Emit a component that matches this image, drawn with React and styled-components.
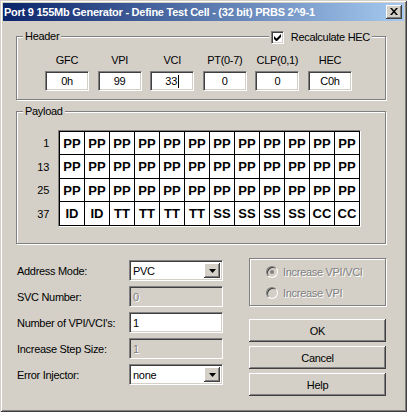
import React from "react";
import styled, { createGlobalStyle } from "styled-components";

const GlobalStyle = createGlobalStyle`
  html, body { margin: 0; padding: 0; background: #d4d0c8; }
  body {
    font-family: "Liberation Sans", Arial, sans-serif;
    font-size: 11px;
    letter-spacing: -0.3px;
    color: #000;
  }
  * { box-sizing: border-box; }
`;

const Window = styled.div`
  width: 407px;
  height: 412px;
  padding: 3px;
  background: #d4d0c8;
  box-shadow: inset 1px 1px 0 #d4d0c8, inset -1px -1px 0 #404040,
    inset 2px 2px 0 #fff, inset -2px -2px 0 #808080;
  display: flex;
  flex-direction: column;
`;

const TitleBar = styled.div`
  height: 18px;
  background: linear-gradient(to right, #0a246a, #a6caf0);
  display: flex;
  align-items: center;
  justify-content: space-between;
  padding: 0 2px 0 1px;
`;

const TitleText = styled.div`
  color: #fff;
  font-weight: bold;
  font-size: 11px;
  letter-spacing: -0.25px;
  white-space: nowrap;
`;

const Raised = styled.div`
  background: #d4d0c8;
  box-shadow: inset -1px -1px 0 #404040, inset 1px 1px 0 #fff,
    inset -2px -2px 0 #808080, inset 2px 2px 0 #d4d0c8;
`;

const CloseButton = styled(Raised)`
  width: 16px;
  height: 14px;
  display: flex;
  align-items: center;
  justify-content: center;
  padding-bottom: 1px;
`;

const Body = styled.div`
  padding: 15px 18px 0 13px;
  display: flex;
  flex-direction: column;
`;

const GroupBox = styled.div`
  position: relative;
  height: ${(p) => p.$h}px;
  border: 1px solid #808080;
  box-shadow: inset 1px 1px 0 #fff, 1px 1px 0 #fff;
  margin-top: ${(p) => p.$mt || 0}px;
`;

const Caption = styled.div`
  position: absolute;
  top: -7px;
  left: 6px;
  padding: 0 2px;
  line-height: 13px;
  background: #d4d0c8;
`;

const CheckCaption = styled.label`
  position: absolute;
  top: -7px;
  right: 13px;
  padding: 0 2px;
  height: 14px;
  display: flex;
  align-items: center;
  gap: 7px;
  background: #d4d0c8;
`;

const Sunken = styled.div`
  border: 1px solid;
  border-color: #808080 #fff #fff #808080;
  box-shadow: inset 1px 1px 0 #404040, inset -1px -1px 0 #d4d0c8;
`;

const CheckBox = styled(Sunken)`
  width: 13px;
  height: 13px;
  background: #fff;
  display: flex;
  align-items: center;
  justify-content: center;
`;

const HeaderGrid = styled.div`
  display: grid;
  grid-template-columns: repeat(6, 44px);
  grid-template-rows: 14px 20px;
  column-gap: 8.6px;
  row-gap: 4px;
  padding: 16px 0 0 28px;
`;

const ColLabel = styled.div`
  text-align: center;
  line-height: 14px;
  white-space: nowrap;
`;

const Field = styled(Sunken)`
  height: ${(p) => p.$h || 20}px;
  background: ${(p) => (p.$disabled ? "#d4d0c8" : "#fff")};
  color: ${(p) => (p.$disabled ? "#808080" : "#000")};
  text-shadow: ${(p) => (p.$disabled ? "1px 1px 0 #fff" : "none")};
  display: flex;
  align-items: center;
  justify-content: ${(p) => (p.$center ? "center" : "flex-start")};
  padding-left: ${(p) => (p.$center ? 0 : 3)}px;
  white-space: nowrap;
`;

const Caret = styled.span`
  display: inline-block;
  width: 1px;
  height: 13px;
  background: #000;
  margin-left: 1px;
`;

const PayloadBody = styled.div`
  display: flex;
  gap: 9px;
  padding: 18px 0 0 8px;
`;

const RowLabels = styled.div`
  width: 24px;
  display: grid;
  grid-template-rows: 22px 23px 22px 23px;
  row-gap: 1px;
  padding-top: 2px;
`;

const RowLabel = styled.div`
  text-align: right;
  display: flex;
  align-items: center;
  justify-content: flex-end;
`;

const GridFrame = styled.div`
  border: 1px solid;
  border-color: #808080 #fff #fff #808080;
`;

const CellGrid = styled.div`
  display: grid;
  grid-template-columns: repeat(12, 24px);
  grid-template-rows: 22px 23px 22px 23px;
  gap: 1px;
  padding: 1px;
  background: #000;
`;

const Cell = styled.div`
  background: #fff;
  font-weight: bold;
  font-size: 13px;
  letter-spacing: 0;
  display: flex;
  align-items: center;
  justify-content: center;
`;

const Bottom = styled.div`
  display: flex;
  margin-top: 14px;
  gap: 26px;
`;

const FormGrid = styled.div`
  display: grid;
  grid-template-columns: 113px 94px;
  grid-auto-rows: 21px;
  row-gap: 5px;
  padding-top: 2px;
`;

const FormLabel = styled.div`
  padding-left: 1px;
  display: flex;
  align-items: center;
  white-space: nowrap;
`;

const Combo = styled(Sunken)`
  height: 21px;
  background: #fff;
  display: flex;
  align-items: stretch;
  padding: 2px;
`;

const ComboText = styled.div`
  flex: 1;
  display: flex;
  align-items: center;
  padding-left: 1px;
`;

const DropButton = styled(Raised)`
  width: 16px;
  display: flex;
  align-items: center;
  justify-content: center;
`;

const RightCol = styled.div`
  width: 138px;
  display: flex;
  flex-direction: column;
  gap: 4px;
`;

const RadioGroup = styled(GroupBox)`
  display: flex;
  flex-direction: column;
  gap: 5px;
  padding: 5px 0 0 16px;
  margin-bottom: 9px;
`;

const RadioRow = styled.div`
  height: 16px;
  display: flex;
  align-items: center;
  gap: 5px;
`;

const RadioDot = styled.span`
  position: relative;
  width: 12px;
  height: 12px;
  border-radius: 50%;
  border: 1px solid;
  border-color: #808080 #fff #fff #808080;
  box-shadow: inset 1px 1px 0 #404040, inset -1px -1px 0 #d4d0c8;
  background: #d4d0c8;
  &::after {
    content: "";
    display: ${(p) => (p.$checked ? "block" : "none")};
    position: absolute;
    left: 3px;
    top: 3px;
    width: 4px;
    height: 4px;
    border-radius: 50%;
    background: #808080;
  }
`;

const DisabledText = styled.span`
  color: #808080;
  text-shadow: 1px 1px 0 #fff;
`;

const Button = styled(Raised)`
  height: 23px;
  display: flex;
  align-items: center;
  justify-content: center;
`;

const rows = [
  { n: 1, cells: Array(12).fill("PP") },
  { n: 13, cells: Array(12).fill("PP") },
  { n: 25, cells: Array(12).fill("PP") },
  {
    n: 37,
    cells: ["ID", "ID", "TT", "TT", "TT", "TT", "SS", "SS", "SS", "SS", "CC", "CC"],
  },
];

const headerFields = [
  ["GFC", "0h"],
  ["VPI", "99"],
  ["VCI", "33"],
  ["PT(0-7)", "0"],
  ["CLP(0,1)", "0"],
  ["HEC", "C0h"],
];

const Triangle = () => (
  <svg width="7" height="4" viewBox="0 0 7 4">
    <path d="M0 0h7L3.5 4z" fill="#000" />
  </svg>
);

const ComboBox = ({ value }) => (
  <Combo>
    <ComboText>{value}</ComboText>
    <DropButton>
      <Triangle />
    </DropButton>
  </Combo>
);

export default function App() {
  return (
    <>
      <GlobalStyle />
      <Window>
        <TitleBar>
          <TitleText>Port 9 155Mb Generator - Define Test Cell - (32 bit) PRBS 2^9-1</TitleText>
          <CloseButton>
            <svg width="8" height="7" viewBox="0 0 8 7">
              <path d="M0 0h2l2 2.5L6 0h2L5 3.5 8 7H6L4 4.5 2 7H0l3-3.5z" fill="#000" />
            </svg>
          </CloseButton>
        </TitleBar>
        <Body>
          <GroupBox $h={64}>
            <Caption>Header</Caption>
            <CheckCaption>
              <CheckBox>
                <svg width="7" height="7" viewBox="0 0 7 7">
                  <path d="M0 2v3l2 2h1l4-4V0L2.5 4.5z" fill="#000" />
                </svg>
              </CheckBox>
              Recalculate HEC
            </CheckCaption>
            <HeaderGrid>
              {headerFields.map(([l]) => (
                <ColLabel key={l}>{l}</ColLabel>
              ))}
              {headerFields.map(([l, v]) => (
                <Field key={l} $center>
                  {v}
                  {l === "VCI" && <Caret />}
                </Field>
              ))}
            </HeaderGrid>
          </GroupBox>
          <GroupBox $h={133} $mt={11}>
            <Caption>Payload</Caption>
            <PayloadBody>
              <RowLabels>
                {rows.map((r) => (
                  <RowLabel key={r.n}>{r.n}</RowLabel>
                ))}
              </RowLabels>
              <GridFrame>
                <CellGrid>
                  {rows.map((r) =>
                    r.cells.map((c, i) => <Cell key={`${r.n}-${i}`}>{c}</Cell>)
                  )}
                </CellGrid>
              </GridFrame>
            </PayloadBody>
          </GroupBox>
          <Bottom>
            <FormGrid>
              <FormLabel>Address Mode:</FormLabel>
              <ComboBox value="PVC" />
              <FormLabel>SVC Number:</FormLabel>
              <Field $h={21} $disabled>0</Field>
              <FormLabel>Number of VPI/VCI's:</FormLabel>
              <Field $h={21}>1</Field>
              <FormLabel>Increase Step Size:</FormLabel>
              <Field $h={21} $disabled>1</Field>
              <FormLabel>Error Injector:</FormLabel>
              <ComboBox value="none" />
            </FormGrid>
            <RightCol>
              <RadioGroup $h={48}>
                <RadioRow>
                  <RadioDot $checked />
                  <DisabledText>Increase VPI/VCI</DisabledText>
                </RadioRow>
                <RadioRow>
                  <RadioDot />
                  <DisabledText>Increase VPI</DisabledText>
                </RadioRow>
              </RadioGroup>
              <Button>OK</Button>
              <Button>Cancel</Button>
              <Button>Help</Button>
            </RightCol>
          </Bottom>
        </Body>
      </Window>
    </>
  );
}
